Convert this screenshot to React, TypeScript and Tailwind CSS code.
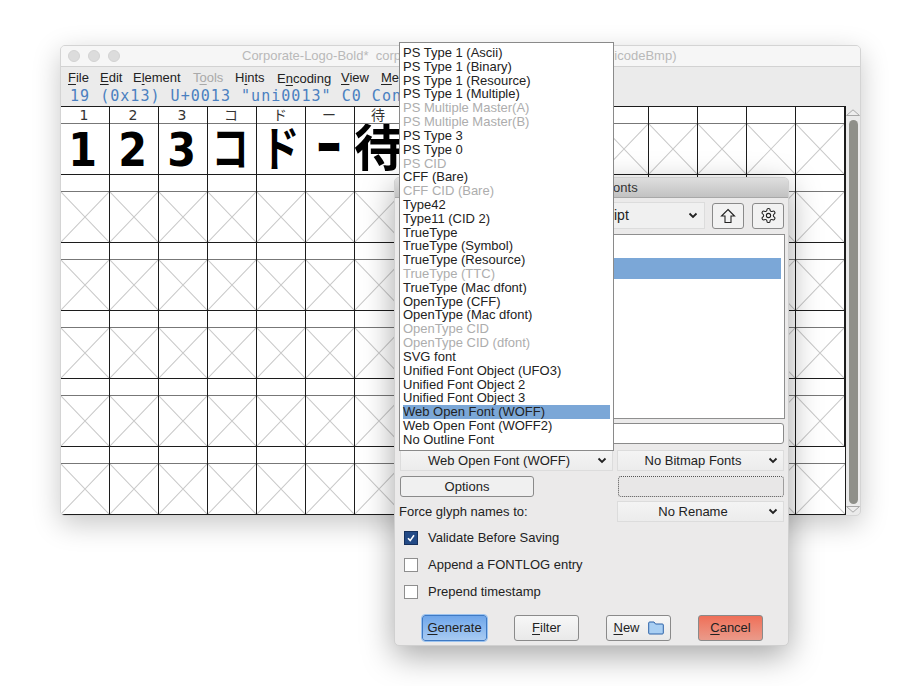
import React from 'react';

const formats: [string, boolean?][] = [
  ['PS Type 1 (Ascii)'],
  ['PS Type 1 (Binary)'],
  ['PS Type 1 (Resource)'],
  ['PS Type 1 (Multiple)'],
  ['PS Multiple Master(A)', true],
  ['PS Multiple Master(B)', true],
  ['PS Type 3'],
  ['PS Type 0'],
  ['PS CID', true],
  ['CFF (Bare)'],
  ['CFF CID (Bare)', true],
  ['Type42'],
  ['Type11 (CID 2)'],
  ['TrueType'],
  ['TrueType (Symbol)'],
  ['TrueType (Resource)'],
  ['TrueType (TTC)', true],
  ['TrueType (Mac dfont)'],
  ['OpenType (CFF)'],
  ['OpenType (Mac dfont)'],
  ['OpenType CID', true],
  ['OpenType CID (dfont)', true],
  ['SVG font'],
  ['Unified Font Object (UFO3)'],
  ['Unified Font Object 2'],
  ['Unified Font Object 3'],
  ['Web Open Font (WOFF)'],
  ['Web Open Font (WOFF2)'],
  ['No Outline Font'],
];

const glyphs = [
  { char: '1', size: 'text-[47px] scale-x-[0.88] pr-[5px]' },
  { char: '2', size: 'text-[47px] scale-x-[0.88] pr-[3px]' },
  { char: '3', size: 'text-[47px] scale-x-[0.88] pr-[3px]' },
  { char: 'コ', size: 'text-[44px] font-black scale-x-[0.85] scale-y-[1.1] pr-[4px]' },
  { char: 'ド', size: 'text-[48px] font-black scale-x-[0.8] pr-[2px] shrink-0' },
  { char: 'ー', size: 'text-[25px] font-black scale-y-[2.2] pr-[2px]' },
  { char: '待', size: 'text-[50px] font-black shrink-0' },
];

const Cross = () => (
  <svg className="block w-full h-full" viewBox="0 0 48 49" preserveAspectRatio="none">
    <path d="M0 0L48 49M48 0L0 49" stroke="#c9c9c9" strokeWidth="1" fill="none" />
  </svg>
);

const Chevron = () => (
  <svg width="10" height="7" viewBox="0 0 10 7" className="shrink-0">
    <path d="M1.5 1.5L5 5L8.5 1.5" stroke="#222" strokeWidth="1.8" fill="none" />
  </svg>
);

const Select = ({ label, className }: { label: string; className: string }) => (
  <div className={`h-[21px] flex items-center bg-gradient-to-b from-[#f4f4f4] to-[#ececec] border border-[#dcdcdc] pr-[5px] ${className}`}>
    <span className="flex-1 text-center">{label}</span>
    <Chevron />
  </div>
);

const Mnemonic = ({ first, rest }: { first: string; rest: string }) => (
  <span>
    <span className="underline underline-offset-2">{first}</span>
    {rest}
  </span>
);

const Check = ({ label, on }: { label: string; on?: boolean }) => (
  <div className="h-[14px] flex items-center gap-[10px] pl-[5px]">
    {on ? (
      <span className="w-[14px] h-[14px] bg-[#234a86] border border-[#16305c] flex items-center justify-center">
        <svg width="10" height="10" viewBox="0 0 10 10">
          <path d="M2 5.2L4.2 7.6L8 2.2" stroke="#fff" strokeWidth="1.6" fill="none" />
        </svg>
      </span>
    ) : (
      <span className="w-[14px] h-[14px] bg-white border border-[#8e8e8e]" />
    )}
    <span>{label}</span>
  </div>
);

const ActionButton = ({ className, children }: { className: string; children: React.ReactNode }) => (
  <div className={`w-[65px] h-[26px] rounded-[3px] flex items-center justify-center ${className}`}>{children}</div>
);

export default function App() {
  return (
    <div className="relative w-[922px] h-[686px] bg-white overflow-hidden text-[13px] text-[#222] font-['Liberation_Sans',Arial,sans-serif]">
      {/* font view window */}
      <div className="absolute left-[60px] top-[45px] w-[801px] h-[471px] rounded-[5px] border border-[#d4d4d4] bg-[#ebebeb] shadow-[0_8px_28px_rgba(0,0,0,0.22)] flex flex-col overflow-hidden">
        <div className="h-[21px] shrink-0 flex items-center border-b border-[#d2d2d2] bg-[#f6f6f6]">
          <div className="flex gap-[8px] pl-[7px]">
            <span className="w-3 h-3 rounded-full bg-[#dcdcdc] border border-[#d2d2d2]" />
            <span className="w-3 h-3 rounded-full bg-[#dcdcdc] border border-[#d2d2d2]" />
            <span className="w-3 h-3 rounded-full bg-[#dcdcdc] border border-[#d2d2d2]" />
          </div>
          <span className="pl-[122px] text-[#b9b9b9] whitespace-pre">Corporate-Logo-Bold*  corporate-logo-bold.sfd</span>
          <span className="ml-[84px] text-[#b9b9b9] whitespace-pre">(UnicodeBmp)</span>
        </div>
        <div className="h-[19px] shrink-0 flex items-center pl-[7px] pt-[3px] whitespace-nowrap">
          <span className="w-[32px]"><Mnemonic first="F" rest="ile" /></span>
          <span className="w-[33px]"><Mnemonic first="E" rest="dit" /></span>
          <span className="w-[60px]">E<span className="underline underline-offset-2">l</span>ement</span>
          <span className="w-[42px] text-[#a9a9a9]">T<span className="underline underline-offset-2">o</span>ols</span>
          <span className="w-[42px]">H<span className="underline underline-offset-2">i</span>nts</span>
          <span className="w-[64px] mt-px">E<span className="underline underline-offset-2">n</span>coding</span>
          <span className="w-[40px]"><Mnemonic first="V" rest="iew" /></span>
          <Mnemonic first="M" rest="etrics" />
        </div>
        <div className="h-[20px] shrink-0 flex items-center pl-[9px] pt-px text-[15px] tracking-[1.03px] text-[#4a80c0] font-['DejaVu_Sans_Mono',monospace] whitespace-pre">
          19 (0x13) U+0013 "uni0013" C0 Control
        </div>
        <div className="flex flex-1 min-h-0">
          <div className="w-[785px] shrink-0 bg-white border-t border-r border-[#1c1c1c] grid grid-cols-[repeat(16,49px)] content-start">
            {Array.from({ length: 6 }).map((_, row) =>
              Array.from({ length: 16 }).map((_, col) => {
                const glyph = row === 0 ? glyphs[col] : undefined;
                return (
                  <div key={`${row}-${col}`} className="h-[68px] border-r border-b border-[#1c1c1c] flex flex-col last:border-r-0">
                    <div className="h-[17px] shrink-0 border-b border-[#777] flex items-center justify-center pr-[2px] text-[14px] leading-none text-[#333] font-['DejaVu_Sans','Noto_Sans_CJK_JP',sans-serif] overflow-hidden">
                      {glyph?.char}
                    </div>
                    <div className="flex-1 min-h-0 flex items-center justify-center overflow-hidden">
                      {glyph ? (
                        <span className={`leading-none font-bold text-black font-['DejaVu_Sans','Noto_Sans_CJK_JP',sans-serif] ${glyph.size}`}>{glyph.char}</span>
                      ) : (
                        <Cross />
                      )}
                    </div>
                  </div>
                );
              }),
            )}
          </div>
          <div className="flex-1 flex flex-col items-center pt-[3px] pb-[2px] gap-[1px]">
            <svg width="14" height="7" viewBox="0 0 14 7">
              <path d="M0.5 6.5L7 0.8L13.5 6.5Z" stroke="#a8a8a8" fill="#eee" />
            </svg>
            <div className="w-[9px] flex-1 rounded-full bg-[#8f908a] mt-[3px] mb-[1px]" />
            <svg width="14" height="7" viewBox="0 0 14 7">
              <path d="M0.5 0.5L7 6.2L13.5 0.5Z" stroke="#a8a8a8" fill="#eee" />
            </svg>
          </div>
        </div>
      </div>

      {/* generate fonts dialog */}
      <div className="absolute left-[394px] top-[177px] w-[395px] h-[469px] rounded-[5px] bg-[#ebeaea] border border-[#d0d0d0] shadow-[0_10px_32px_rgba(0,0,0,0.35)] flex flex-col overflow-hidden">
        <div className="h-[20px] shrink-0 flex items-center justify-center pl-[2px] bg-gradient-to-b from-[#dedede] to-[#c2c2c2] border-b border-[#a8a8a8] text-[#333]">
          Generate Fonts
        </div>
        <div className="flex flex-col flex-1 pl-[4px] pr-[3px]">
          <div className="flex items-center h-[27px] mt-[4px] pr-[1px]">
            <div className="flex-1 h-[27px] flex items-center bg-[#f0f0f0] border border-[#dcdcdc] pr-[6px] text-[14px]">
              <span className="flex-1 pl-[165px]">PostScript</span>
              <Chevron />
            </div>
            <div className="w-[32px] h-[26px] ml-[7px] rounded-[3px] border border-[#8a8a8a] bg-[#f2f2f2] flex items-center justify-center">
              <svg width="16" height="16" viewBox="0 0 16 16">
                <path d="M8 1.5L14.5 8H11V14.5H5V8H1.5Z" stroke="#222" strokeWidth="1.1" fill="none" />
              </svg>
            </div>
            <div className="w-[32px] h-[26px] ml-[8px] rounded-[3px] border border-[#8a8a8a] bg-[#f2f2f2] flex items-center justify-center">
              <svg width="17" height="17" viewBox="0 0 24 24" fill="none" stroke="#222" strokeWidth="1.5">
                <path d="M12.22 2h-.44a2 2 0 0 0-2 2v.18a2 2 0 0 1-1 1.73l-.43.25a2 2 0 0 1-2 0l-.15-.08a2 2 0 0 0-2.73.73l-.22.38a2 2 0 0 0 .73 2.73l.15.1a2 2 0 0 1 1 1.72v.51a2 2 0 0 1-1 1.74l-.15.09a2 2 0 0 0-.73 2.73l.22.38a2 2 0 0 0 2.73.73l.15-.08a2 2 0 0 1 2 0l.43.25a2 2 0 0 1 1 1.73V20a2 2 0 0 0 2 2h.44a2 2 0 0 0 2-2v-.18a2 2 0 0 1 1-1.73l.43-.25a2 2 0 0 1 2 0l.15.08a2 2 0 0 0 2.73-.73l.22-.39a2 2 0 0 0-.73-2.73l-.15-.08a2 2 0 0 1-1-1.74v-.5a2 2 0 0 1 1-1.74l.15-.09a2 2 0 0 0 .73-2.73l-.22-.38a2 2 0 0 0-2.73-.73l-.15.08a2 2 0 0 1-2 0l-.43-.25a2 2 0 0 1-1-1.73V4a2 2 0 0 0-2-2z" />
                <circle cx="12" cy="12" r="3" />
              </svg>
            </div>
          </div>
          <div className="h-[185px] mt-[5px] bg-white border border-[#8f8f8f] pt-[23px] pr-[3px]">
            <div className="h-[21px] bg-[#7ba7d7]" />
          </div>
          <div className="h-[21px] mt-[4px] mr-[1px] bg-white border border-[#8a8a8a] rounded-[3px]" />
          <div className="flex justify-between mt-[6px] mr-[1px] pl-[1px]">
            <Select label="Web Open Font (WOFF)" className="w-[213px]" />
            <Select label="No Bitmap Fonts" className="w-[167px]" />
          </div>
          <div className="flex justify-between mt-[5px] mr-[1px] pl-[1px]">
            <div className="w-[134px] h-[21px] rounded-[3px] border border-[#8a8a8a] bg-[#f0f0f0] flex items-center justify-center">Options</div>
            <div className="w-[166px] h-[21px] rounded-[3px] border border-dotted border-[#555] bg-[#e8e7e7]" />
          </div>
          <div className="flex justify-between items-center mt-[4px] mr-[1px]">
            <span>Force glyph names to:</span>
            <Select label="No Rename" className="w-[167px]" />
          </div>
          <div className="flex flex-col gap-[13px] mt-[9px]">
            <Check label="Validate Before Saving" on />
            <Check label="Append a FONTLOG entry" />
            <Check label="Prepend timestamp" />
          </div>
          <div className="flex gap-[27px] pl-[23px] mt-[16px]">
            <ActionButton className="bg-gradient-to-b from-[#6fa6ea] to-[#a8cbf2] border border-[#3f7ac4] outline outline-1 outline-[#9cc3ef]">
              <Mnemonic first="G" rest="enerate" />
            </ActionButton>
            <ActionButton className="bg-gradient-to-b from-[#f7f7f7] to-[#e9e9e9] border border-[#8a8a8a]">
              <Mnemonic first="F" rest="ilter" />
            </ActionButton>
            <ActionButton className="bg-gradient-to-b from-[#f7f7f7] to-[#e9e9e9] border border-[#8a8a8a] gap-[8px]">
              <Mnemonic first="N" rest="ew" />
              <svg width="16" height="14" viewBox="0 0 16 14">
                <path d="M0.7 12V2A1 1 0 0 1 1.7 1H6L7.5 3H14.3A1 1 0 0 1 15.3 4V12A1 1 0 0 1 14.3 13H1.7A1 1 0 0 1 0.7 12Z" fill="#a9cff3" stroke="#2c62a8" />
              </svg>
            </ActionButton>
            <ActionButton className="bg-gradient-to-b from-[#ef6f58] to-[#ea9a8a] border border-[#8a8a8a]">
              <Mnemonic first="C" rest="ancel" />
            </ActionButton>
          </div>
        </div>
      </div>

      {/* output format popup */}
      <div className="absolute left-[399px] top-[42px] w-[215px] h-[409px] bg-white border border-[#8a8a8a] pt-[3px] px-[3px] text-[13px] leading-[13.82px] text-[#222] whitespace-nowrap">
        {formats.map(([name, disabled]) => (
          <div key={name} className={`${disabled ? 'text-[#adadad]' : ''} ${name === 'Web Open Font (WOFF)' ? 'bg-[#7ba7d7]' : ''}`}>
            {name}
          </div>
        ))}
      </div>
    </div>
  );
}
